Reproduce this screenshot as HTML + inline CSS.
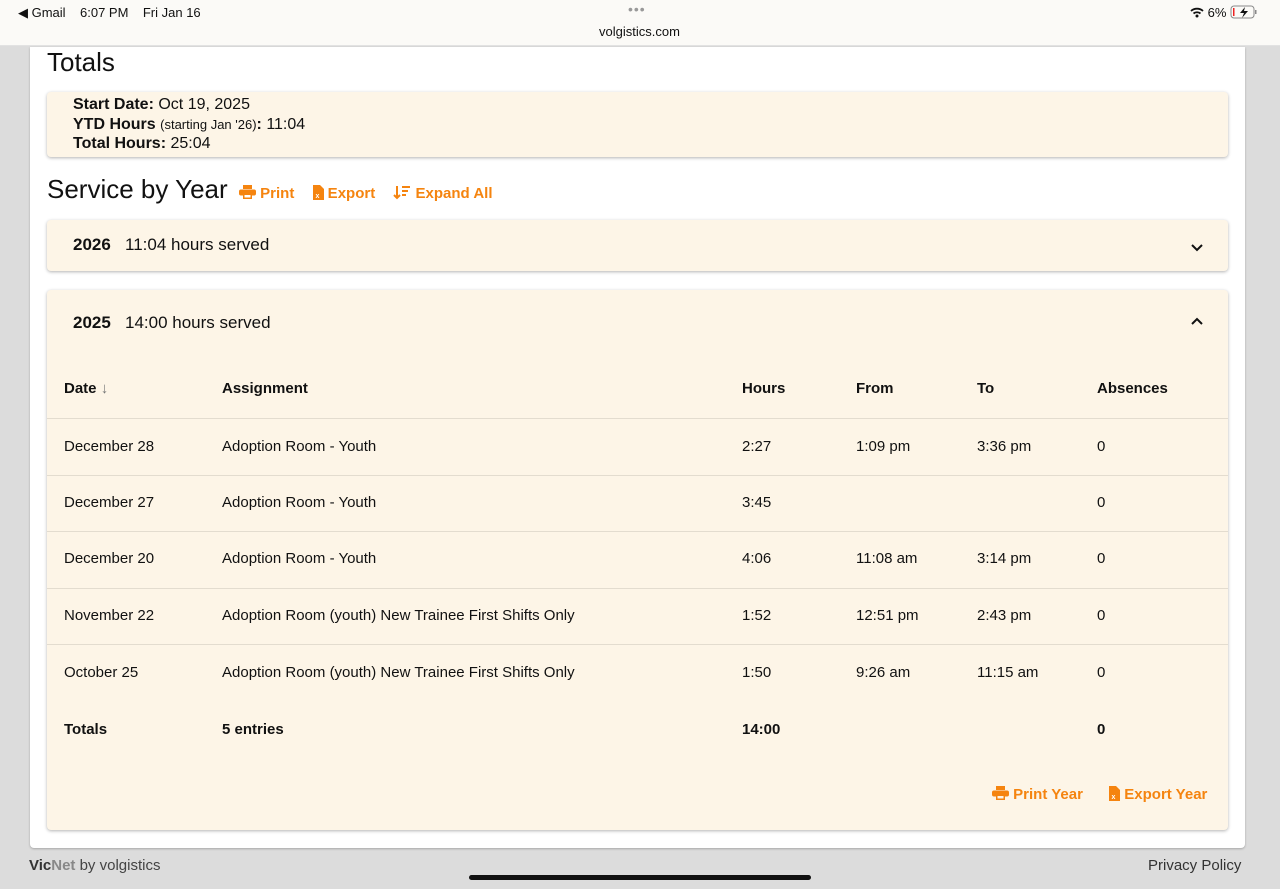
<!DOCTYPE html>
<html><head><meta charset="utf-8"><style>
*{box-sizing:border-box;margin:0;padding:0}
body{width:1280px;height:889px;background:#dcdcdc;font-family:"Liberation Sans",sans-serif;color:#111;position:relative;overflow:hidden}
.top{position:absolute;left:0;top:0;width:1280px;height:46px;background:#fbfaf7;border-bottom:1px solid #e2e2e2;font-size:13px}
.panel{position:absolute;left:30px;top:47px;width:1215px;height:801px;background:#fff;border-radius:0 0 4px 4px;box-shadow:0 1px 2px rgba(0,0,0,.25)}
.card{position:absolute;left:17px;width:1181px;background:#fdf5e7;border-radius:4px;box-shadow:0 1px 3px rgba(0,0,0,.3)}
.abs{position:absolute;white-space:nowrap}
.or{color:#f5840f;font-weight:600}
.row{position:absolute;left:0;width:1181px;border-top:1px solid #e3dccf}
.t{font-size:15px;position:absolute;white-space:nowrap}
</style></head><body>
<div class="top">
<div class="abs" style="left:18px;top:5px;">◀ Gmail&nbsp;&nbsp;&nbsp; 6:07 PM&nbsp;&nbsp;&nbsp; Fri Jan 16</div>
<div class="abs" style="left:628px;top:1px;color:#999;font-size:14px;letter-spacing:1px">•••</div>
<div class="abs" style="left:599px;top:24px;">volgistics.com</div>
<div class="abs" style="left:1190px;top:5px;">
<svg width="14" height="11" viewBox="0 0 14 11" style="vertical-align:-1px"><path d="M1 4a9 9 0 0 1 12 0M3.5 6.5a5.5 5.5 0 0 1 7 0" stroke="#111" stroke-width="1.8" fill="none"/><circle cx="7" cy="9" r="1.5" fill="#111"/></svg> 6%
<svg width="28" height="14" viewBox="0 0 28 14" style="vertical-align:-2px"><rect x="1" y="1" width="23" height="12" rx="3" fill="none" stroke="#888"/><rect x="3" y="3" width="1.5" height="8" fill="#e22"/><path d="M15 2l-5 6h4l-2 5 6-7h-4z" fill="#111"/><rect x="25" y="5" width="1.5" height="4" fill="#888"/></svg></div>
</div>
<div class="panel">
<div class="abs" style="left:17px;top:0px;font-size:26px">Totals</div>
<div class="card" style="top:45px;height:65px;font-size:16px;line-height:19.5px;padding:3px 0 0 26px">
<div><b>Start Date:</b> Oct 19, 2025</div>
<div><b>YTD Hours</b> <span style="font-size:13px">(starting Jan '26)</span><b>:</b> 11:04</div>
<div><b>Total Hours:</b> 25:04</div>
</div>
<div class="abs" style="left:17px;top:127px;font-size:26px">Service by Year</div>
<div class="abs or" style="left:209px;top:138px;font-size:15px">
<svg width="17" height="14" viewBox="0 0 17 14" style="vertical-align:-1px"><rect x="4" y="0" width="9" height="4" fill="#f5840f"/><rect x="0" y="4.5" width="17" height="6" rx="2" fill="#f5840f"/><rect x="4" y="9" width="9" height="5" fill="#f5840f"/><rect x="5.5" y="10" width="6" height="2.5" fill="#fff"/></svg> Print
<span style="margin-left:14px"><svg width="11" height="15" viewBox="0 0 11 15" style="vertical-align:-2px"><path d="M0 0h7l4 4v11H0z" fill="#f5840f"/><text x="2.5" y="13" font-size="7" fill="#fff" font-family="Liberation Sans">x</text></svg> Export</span>
<span style="margin-left:14px"><svg width="18" height="15" viewBox="0 0 18 15" style="vertical-align:-2px"><path d="M4 1v12M1 10l3 3 3-3" stroke="#f5840f" stroke-width="2" fill="none"/><path d="M9 2h8M9 6h6M9 10h4" stroke="#f5840f" stroke-width="2"/></svg> Expand All</span></div>
<div class="card" style="top:173px;height:51px">
<div class="t" style="left:26px;top:15px;font-size:17px"><b>2026</b>&nbsp;&nbsp;&nbsp;11:04 hours served</div>
<svg class="abs" style="left:1144px;top:24px" width="12" height="8" viewBox="0 0 12 8"><path d="M1 1l5 5 5-5" stroke="#111" stroke-width="2" fill="none"/></svg>
</div>
<div class="card" style="top:243px;height:540px">
<div class="t" style="left:26px;top:23px;font-size:17px"><b>2025</b>&nbsp;&nbsp;&nbsp;14:00 hours served</div>
<svg class="abs" style="left:1144px;top:27px" width="12" height="8" viewBox="0 0 12 8"><path d="M1 7l5-5 5 5" stroke="#111" stroke-width="2" fill="none"/></svg>
<div style="position:absolute;top:90px;left:0;width:1181px;height:20px;font-size:14px;font-weight:bold">
<span class="t" style="left:17px">Date <span style="color:#777">↓</span></span><span class="t" style="left:175px">Assignment</span><span class="t" style="left:695px">Hours</span><span class="t" style="left:809px">From</span><span class="t" style="left:930px">To</span><span class="t" style="left:1050px">Absences</span></div>
<div class="row" style="top:128px;height:57px"><span class="t" style="left:17px;top:19px">December 28</span><span class="t" style="left:175px;top:19px">Adoption Room - Youth</span><span class="t" style="left:695px;top:19px">2:27</span><span class="t" style="left:809px;top:19px">1:09 pm</span><span class="t" style="left:930px;top:19px">3:36 pm</span><span class="t" style="left:1050px;top:19px">0</span></div>
<div class="row" style="top:185px;height:56px"><span class="t" style="left:17px;top:18px">December 27</span><span class="t" style="left:175px;top:18px">Adoption Room - Youth</span><span class="t" style="left:695px;top:18px">3:45</span><span class="t" style="left:1050px;top:18px">0</span></div>
<div class="row" style="top:241px;height:57px"><span class="t" style="left:17px;top:18px">December 20</span><span class="t" style="left:175px;top:18px">Adoption Room - Youth</span><span class="t" style="left:695px;top:18px">4:06</span><span class="t" style="left:809px;top:18px">11:08 am</span><span class="t" style="left:930px;top:18px">3:14 pm</span><span class="t" style="left:1050px;top:18px">0</span></div>
<div class="row" style="top:298px;height:56px"><span class="t" style="left:17px;top:18px">November 22</span><span class="t" style="left:175px;top:18px">Adoption Room (youth) New Trainee First Shifts Only</span><span class="t" style="left:695px;top:18px">1:52</span><span class="t" style="left:809px;top:18px">12:51 pm</span><span class="t" style="left:930px;top:18px">2:43 pm</span><span class="t" style="left:1050px;top:18px">0</span></div>
<div class="row" style="top:354px;height:57px"><span class="t" style="left:17px;top:19px">October 25</span><span class="t" style="left:175px;top:19px">Adoption Room (youth) New Trainee First Shifts Only</span><span class="t" style="left:695px;top:19px">1:50</span><span class="t" style="left:809px;top:19px">9:26 am</span><span class="t" style="left:930px;top:19px">11:15 am</span><span class="t" style="left:1050px;top:19px">0</span></div>
<div style="position:absolute;top:431px;left:0;font-weight:bold;font-size:15px"><span class="t" style="left:17px">Totals</span><span class="t" style="left:175px">5 entries</span><span class="t" style="left:695px">14:00</span><span class="t" style="left:1050px">0</span></div>
<div class="abs or" style="left:945px;top:496px;font-size:15px">
<svg width="17" height="14" viewBox="0 0 17 14" style="vertical-align:-1px"><rect x="4" y="0" width="9" height="4" fill="#f5840f"/><rect x="0" y="4.5" width="17" height="6" rx="2" fill="#f5840f"/><rect x="4" y="9" width="9" height="5" fill="#f5840f"/><rect x="5.5" y="10" width="6" height="2.5" fill="#fdf5e7"/></svg> Print Year
<span style="margin-left:22px"><svg width="11" height="15" viewBox="0 0 11 15" style="vertical-align:-2px"><path d="M0 0h7l4 4v11H0z" fill="#f5840f"/><text x="2.5" y="13" font-size="7" fill="#fff" font-family="Liberation Sans">x</text></svg> Export Year</span></div>
</div>
</div>
<div class="abs" style="left:29px;top:857px;font-size:15px;color:#444"><b style="color:#333">Vic</b><b style="color:#888">Net</b> by volgistics</div>
<div class="abs" style="left:1148px;top:857px;font-size:15px;color:#333">Privacy Policy</div>
<div class="abs" style="left:469px;top:875px;width:342px;height:5px;border-radius:3px;background:#111"></div>
</body></html>
